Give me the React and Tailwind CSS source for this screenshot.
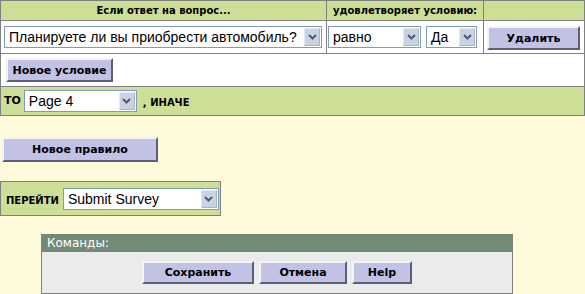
import React from "react";

const btn =
  "border-2 border-t-[#f4f4f4] border-l-[#f4f4f4] border-b-[#5d5d7d] border-r-[#5d5d7d] bg-[#c2c2e4] font-bold text-[11px] text-black font-['DejaVu_Sans',sans-serif] leading-none";

function Chevron() {
  return (
    <svg width="9" height="6" viewBox="0 0 9 6">
      <path d="M1 1 L4.5 4.5 L8 1" fill="none" stroke="#4b5a78" strokeWidth="2" />
    </svg>
  );
}

function Select({ value, className }) {
  return (
    <div className={`flex h-[22px] items-stretch border border-[#7f9db9] bg-white ${className}`}>
      <span className="flex-1 truncate pl-[4px] font-['Liberation_Sans',Arial,sans-serif] text-[14px] leading-[20px] text-black">
        {value}
      </span>
      <span className="m-px flex w-[16px] items-center justify-center border border-[#e4eaf4] border-b-[#a8b4c8] border-r-[#a8b4c8] bg-[#c9d3e3]">
        <Chevron />
      </span>
    </div>
  );
}

export default function App() {
  const label = "font-['DejaVu_Sans',sans-serif] font-bold text-[10px] text-black";
  return (
    <div className="min-h-screen w-[585px] bg-[#fffadc]">
      <table className="w-full border-collapse border border-[#808080]">
        <tbody>
          <tr className="h-[20px] bg-[#cddf96]">
            <th className={`w-[326px] border border-[#808080] p-0 ${label}`}>Если ответ на вопрос...</th>
            <th className={`w-[157px] border border-[#808080] p-0 ${label}`}>удовлетворяет условию:</th>
            <th className="border border-[#808080] p-0"></th>
          </tr>
          <tr className="h-[33px] bg-white">
            <td className="border border-[#808080] px-[3px]">
              <Select value="Планируете ли вы приобрести автомобиль?" className="w-[318px]" />
            </td>
            <td className="border border-[#808080] pl-[1px]">
              <div className="flex gap-[5px]">
                <Select value="равно" className="w-[93px]" />
                <Select value="Да" className="w-[51px]" />
              </div>
            </td>
            <td className="border border-[#808080] pl-[3px]">
              <button className={`${btn} h-[24px] w-[93px]`}>Удалить</button>
            </td>
          </tr>
          <tr className="h-[33px] bg-white">
            <td colSpan={3} className="border border-[#808080] pb-[2px] pl-[5px]">
              <button className={`${btn} h-[24px] w-[107px]`}>Новое условие</button>
            </td>
          </tr>
          <tr className="h-[29px] bg-[#cddf96]">
            <td colSpan={3} className="border border-[#808080] pl-[3px]">
              <div className="flex items-center">
                <span className={`${label} text-[11px]`}>ТО</span>
                <Select value="Page 4" className="ml-[3px] w-[113px]" />
                <span className={`${label} ml-[6px] mt-[3px]`}>, ИНАЧЕ</span>
              </div>
            </td>
          </tr>
        </tbody>
      </table>

      <div className="ml-[2px] mt-[19px]">
        <button className={`${btn} h-[25px] w-[156px]`}>Новое правило</button>
      </div>

      <div className="mt-[19px] flex h-[35px] w-[221px] items-center border border-[#808080] bg-[#cddf96] pl-[5px]">
        <span className={`${label} mt-[3px]`}>ПЕРЕЙТИ</span>
        <Select value="Submit Survey" className="ml-[4px] w-[156px]" />
      </div>

      <div className="ml-[41px] mt-[18px] w-[472px] border border-[#808080] border-t-0 bg-[#ebebeb]">
        <div className="h-[18px] bg-[#748a78] pl-[5px] font-['DejaVu_Sans',sans-serif] text-[12px] leading-[18px] text-white">
          Команды:
        </div>
        <div className="flex h-[41px] items-center justify-center gap-[5px] pb-[1px]">
          <button className={`${btn} h-[23px] w-[112px]`}>Сохранить</button>
          <button className={`${btn} h-[23px] w-[88px]`}>Отмена</button>
          <button className={`${btn} h-[23px] w-[60px]`}>Help</button>
        </div>
      </div>
    </div>
  );
}
